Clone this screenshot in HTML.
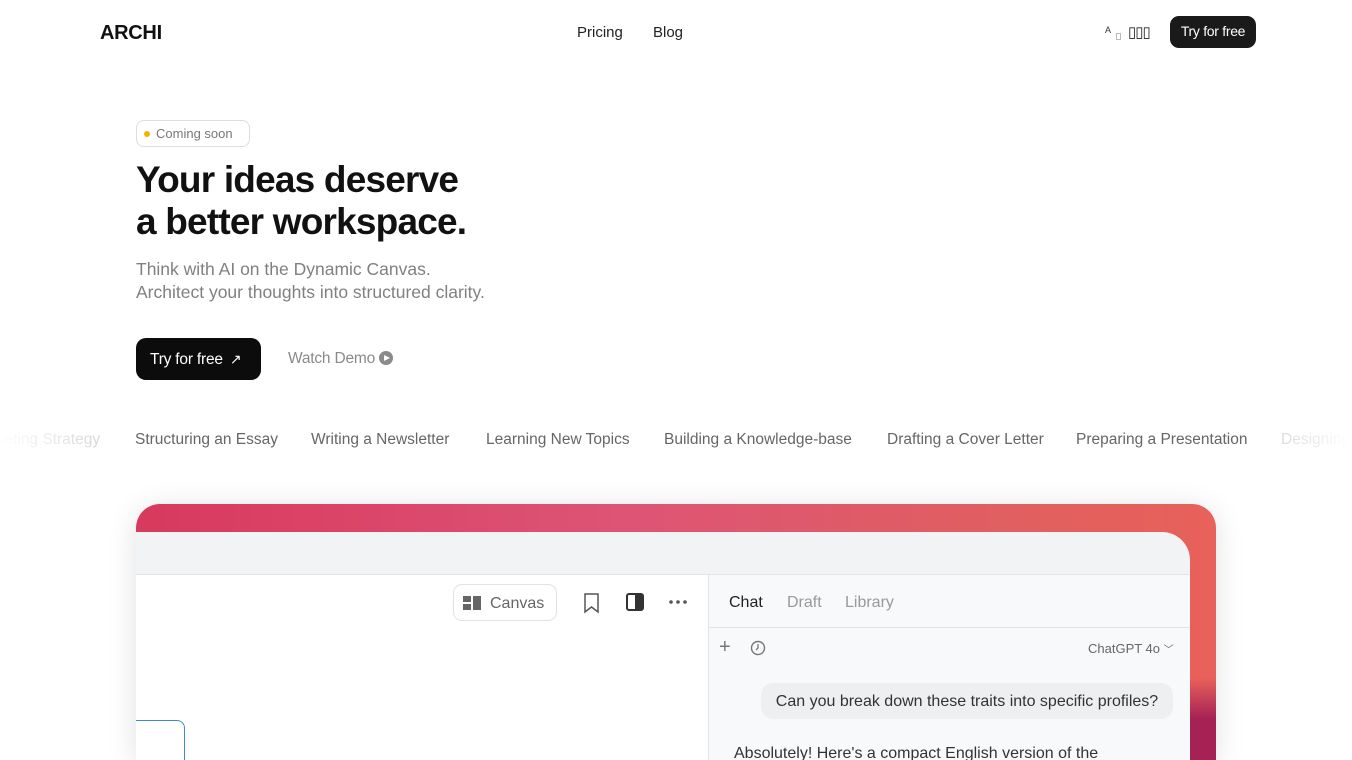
<!DOCTYPE html>
<html style="overflow:hidden;height:760px"><head><style>
*{margin:0;padding:0;box-sizing:border-box}
body{width:1352px;height:760px;overflow:hidden;background:#fff;font-family:"Liberation Sans",sans-serif;color:#111;position:relative}
.a{position:absolute;white-space:nowrap}
</style></head><body>
<div class="a" style="left:100px;top:22px;font-size:20px;font-weight:bold;letter-spacing:-0.3px">ARCHI</div>
<div class="a" style="left:577px;top:24px;font-size:15px;color:#222">Pricing</div>
<div class="a" style="left:653px;top:24px;font-size:15px;color:#222">Blog</div>
<div class="a" style="left:1105px;top:25px;font-size:9px;color:#333">A</div>
<div class="a" style="left:1116px;top:33px;width:5px;height:7px;border:1px solid #bbb"></div>
<div class="a" style="left:1128px;top:23px;font-size:15px;color:#222;letter-spacing:-1px">▯▯▯</div>
<div class="a" style="left:1170px;top:16px;width:86px;height:32px;background:#1a1a1a;border-radius:9px;color:#fff;font-size:14px;text-align:center;line-height:31px;letter-spacing:-0.3px">Try for free</div>

<div class="a" style="left:136px;top:120px;width:114px;height:27px;border:1px solid #ddd;border-radius:8px;font-size:13px;color:#777;line-height:25px;padding-left:19px">Coming soon<span style="position:absolute;left:7px;top:10px;width:6px;height:6px;border-radius:3px;background:#f0b400"></span></div>
<div class="a" style="left:136px;top:159px;font-size:37px;font-weight:bold;line-height:42px;letter-spacing:-0.8px">Your ideas deserve<br>a better workspace.</div>
<div class="a" style="left:136px;top:258px;font-size:17.5px;line-height:23px;color:#808080;letter-spacing:0">Think with AI on the Dynamic Canvas.<br>Architect your thoughts into structured clarity.</div>
<div class="a" style="left:136px;top:338px;width:125px;height:42px;background:#0c0c0c;border-radius:10px;color:#fff;font-size:15.5px;line-height:42px;padding-left:14px;letter-spacing:-0.2px">Try for free <span style="font-size:14px;margin-left:3px">↗</span></div>
<div class="a" style="left:288px;top:350px;font-size:15.5px;color:#8a8a8a;letter-spacing:-0.2px">Watch Demo <span style="display:inline-block;width:14px;height:14px;border-radius:7px;background:#8a8a8a;vertical-align:-2px;position:relative"><span style="position:absolute;left:5px;top:3.5px;border-left:6px solid #fff;border-top:3.5px solid transparent;border-bottom:3.5px solid transparent"></span></span></div>

<div class="a" style="left:0;top:431px;width:1352px;font-size:15.5px;color:#666;letter-spacing:0">
<span class="a" style="left:-30px;color:#c8c8c8">Marketing Strategy</span>
<span class="a" style="left:135px">Structuring an Essay</span>
<span class="a" style="left:311px">Writing a Newsletter</span>
<span class="a" style="left:486px">Learning New Topics</span>
<span class="a" style="left:664px">Building a Knowledge-base</span>
<span class="a" style="left:887px">Drafting a Cover Letter</span>
<span class="a" style="left:1076px">Preparing a Presentation</span>
<span class="a" style="left:1281px;color:#ccc">Designing</span>
</div>
<div class="a" style="left:0;top:425px;width:140px;height:30px;background:linear-gradient(90deg,#fff,rgba(255,255,255,0))"></div>
<div class="a" style="left:1250px;top:425px;width:102px;height:30px;background:linear-gradient(270deg,#fff,rgba(255,255,255,0))"></div>

<div class="a" style="left:136px;top:504px;width:1080px;height:256px;border-radius:24px 24px 0 0;background:linear-gradient(180deg,rgba(0,0,0,0) 0%,rgba(0,0,0,0) 68%,rgba(130,0,80,.65) 84%),linear-gradient(90deg,#d8395e 0%,#dd5475 45%,#e05f60 80%,#e8615a 100%);box-shadow:0 4px 30px rgba(0,0,0,.12)"></div>
<div class="a" style="left:136px;top:532px;width:1054px;height:228px;border-radius:0 28px 0 0;background:#f2f3f5;overflow:hidden">
 <div class="a" style="left:0;top:42px;width:1054px;height:1px;background:#e2e3e5"></div>
 <div class="a" style="left:0;top:43px;width:572px;height:200px;background:#fff"></div>
 <div class="a" style="left:-40px;top:188px;width:89px;height:60px;border:1.5px solid #3a8ad8;border-radius:8px;background:#fff"></div>
 <div class="a" style="left:572px;top:43px;width:1px;height:200px;background:#e2e3e5"></div>
 <div class="a" style="left:573px;top:43px;width:481px;height:200px;background:#f8f9fa"></div>
 <div class="a" style="left:573px;top:95px;width:481px;height:1px;background:#e2e3e5"></div>
 <div class="a" style="left:317px;top:52px;width:104px;height:37px;border:1px solid #e2e2e2;border-radius:9px;background:#fff;font-size:16px;color:#666;line-height:37px;padding-left:36px">Canvas
  <span class="a" style="left:9px;top:11px;width:8px;height:6px;background:#666"></span><span class="a" style="left:9px;top:19px;width:8px;height:6px;background:#666"></span><span class="a" style="left:19px;top:11px;width:8px;height:14px;background:#666"></span></div>
 <svg class="a" style="left:446px;top:60px" width="20" height="22"><path d="M3 2h13v18l-6.5-5L3 20z" fill="none" stroke="#555" stroke-width="1.5"/></svg>
 <div class="a" style="left:490px;top:61px;width:18px;height:18px;border:2px solid #333;border-radius:3px"><div style="position:absolute;right:0;top:0;width:7px;height:14px;background:#333"></div></div>
 <svg class="a" style="left:532px;top:67px" width="22" height="6"><circle cx="3" cy="3" r="1.8" fill="#555"/><circle cx="10" cy="3" r="1.8" fill="#555"/><circle cx="17" cy="3" r="1.8" fill="#555"/></svg>
 <div class="a" style="left:593px;top:62px;font-size:16px;color:#222">Chat</div>
 <div class="a" style="left:651px;top:62px;font-size:16px;color:#999">Draft</div>
 <div class="a" style="left:709px;top:62px;font-size:16px;color:#999">Library</div>
 <div class="a" style="left:583px;top:104px;font-size:20px;color:#777;font-weight:300">+</div>
 <svg class="a" style="left:613px;top:107px" width="18" height="18"><circle cx="9" cy="9" r="6.5" fill="none" stroke="#777" stroke-width="1.4"/><path d="M9 5v4l-2 2" fill="none" stroke="#777" stroke-width="1.3"/></svg>
 <div class="a" style="left:952px;top:109px;font-size:13px;color:#666">ChatGPT 4o <span style="font-size:10px">﹀</span></div>
 <div class="a" style="left:625px;top:151px;width:412px;height:36px;background:#eeeff1;border-radius:12px;font-size:16px;color:#333;line-height:38px;text-align:center">Can you break down these traits into specific profiles?</div>
 <div class="a" style="left:598px;top:213px;font-size:16px;color:#333">Absolutely! Here's a compact English version of the</div>
</div>
</body></html>
